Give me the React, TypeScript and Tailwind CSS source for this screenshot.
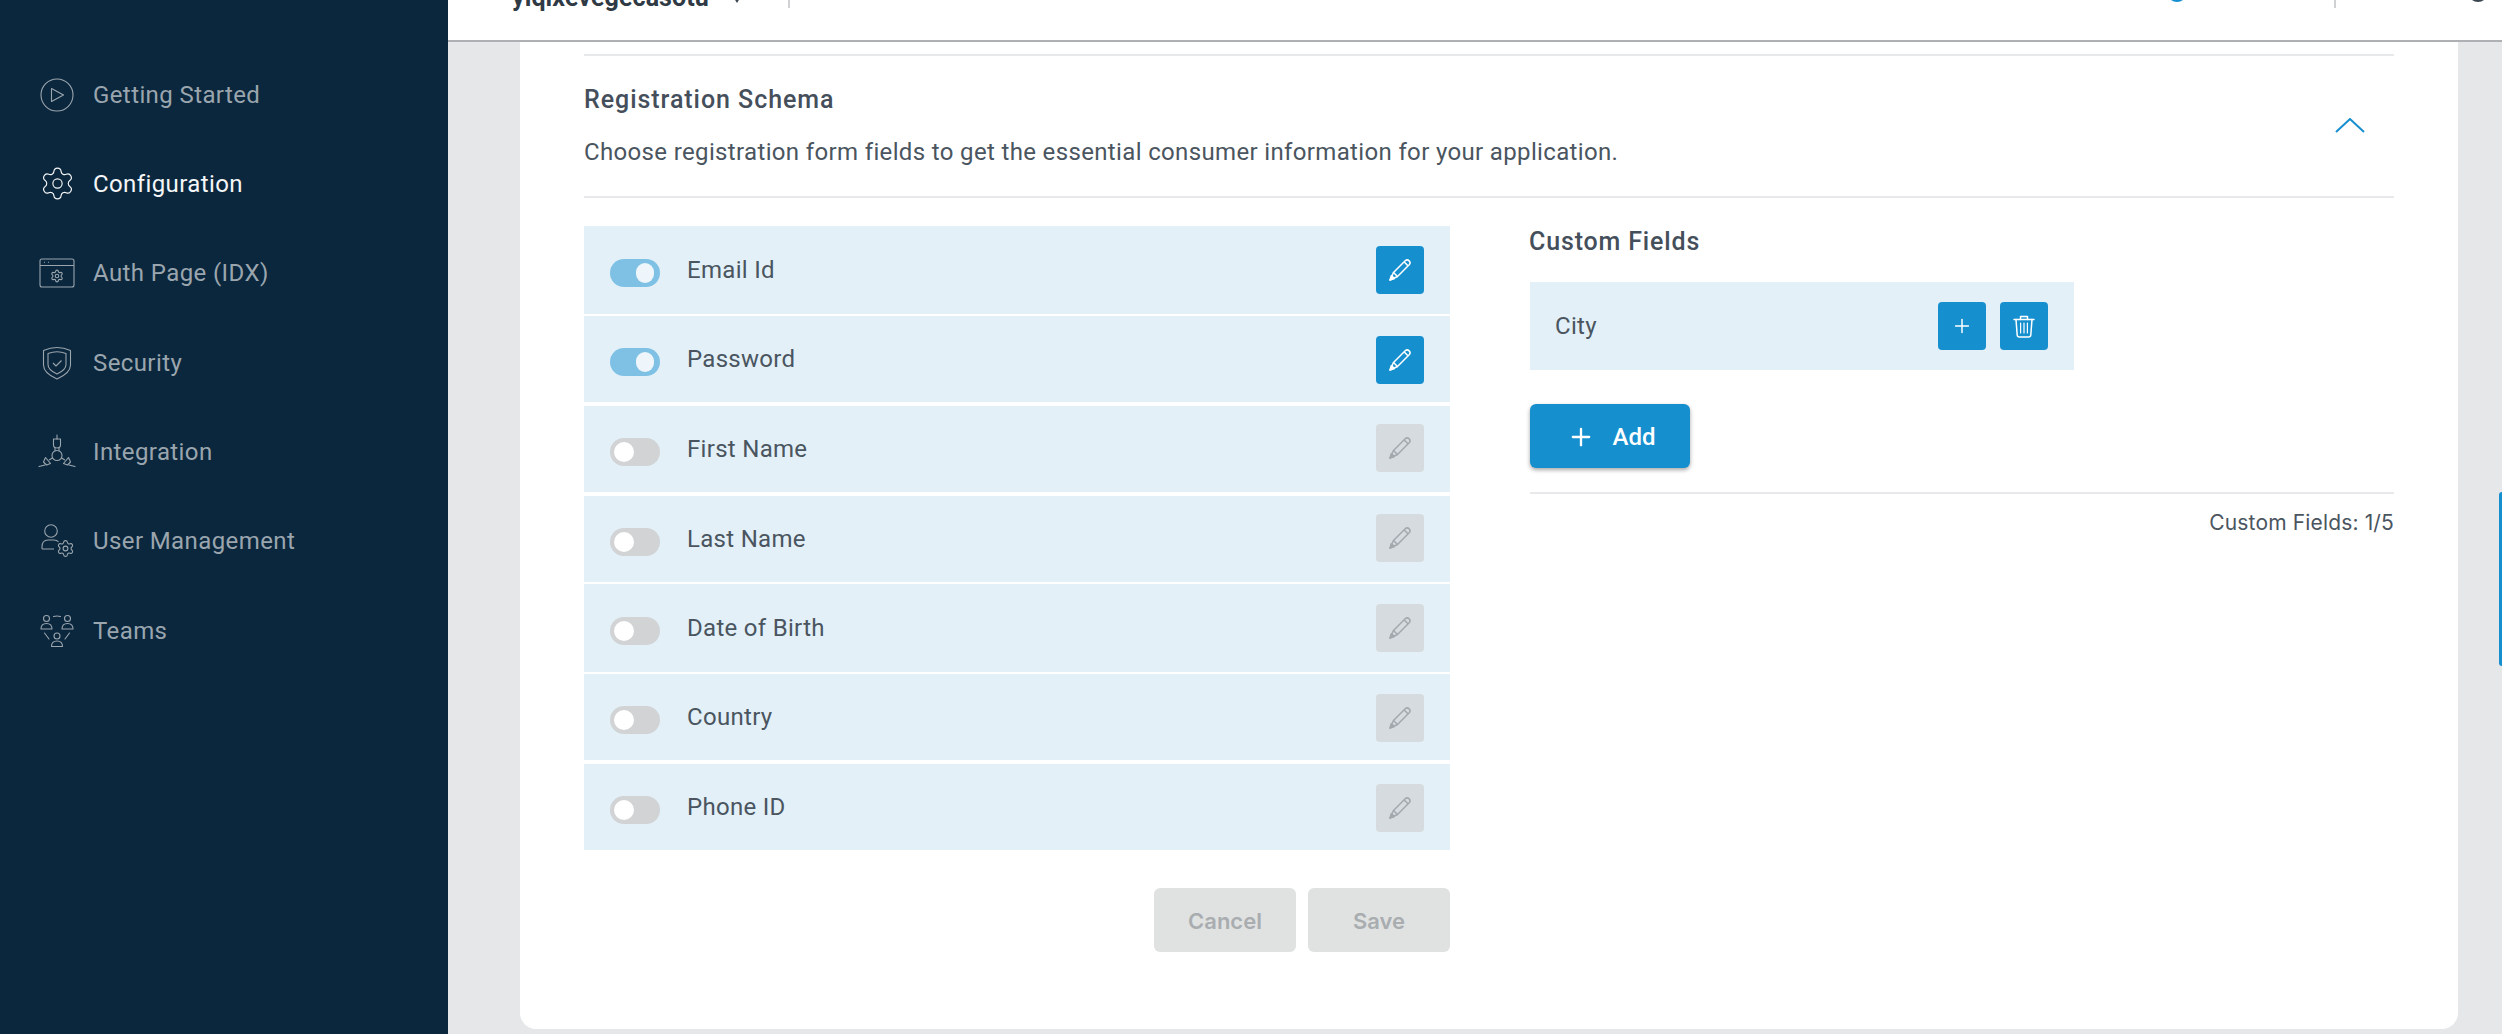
import { Plus, Settings } from 'lucide-react'

const font = "font-['Roboto',sans-serif]"

const PlayIcon = () => (
  <svg width="36" height="36" viewBox="0 0 36 36" fill="none" stroke="currentColor" strokeWidth="1.1">
    <circle cx="18" cy="18" r="16" />
    <path d="M12.5 11.5 L24.5 18 L12.5 24.5 Z" strokeLinejoin="round" />
  </svg>
)

const AuthIcon = () => (
  <svg width="36" height="36" viewBox="0 0 36 36" fill="none" stroke="currentColor" strokeWidth="1.1">
    <rect x="1" y="4" width="34" height="28" rx="2" />
    <path d="M1 10.5 H35" />
    <path d="M5 7.3 h1 M9 7.3 h1" />
    <Settings x={11} y={14} size={14} strokeWidth={1.9} />
  </svg>
)

const ShieldIcon = () => (
  <svg width="36" height="36" viewBox="0 0 36 36" fill="none" stroke="currentColor" strokeWidth="1.1" strokeLinejoin="round">
    <path d="M4.5 5.5 Q18 -.5 31.5 5.5 V20 Q31.5 28 18 34 Q4.5 28 4.5 20 Z" />
    <path d="M9 8.5 Q18 5 27 8.5 V19.5 Q27 25 18 29 Q9 25 9 19.5 Z" />
    <path d="M14 18 l3 3 5.5 -5.5" />
  </svg>
)

const IntegrationIcon = () => (
  <svg width="38" height="36" viewBox="0 0 38 36" fill="none" stroke="currentColor" strokeWidth="1.1" strokeLinecap="round" strokeLinejoin="round" className="-mx-px">
    <circle cx="19" cy="21.5" r="5" />
    <path d="M19 1 v4" />
    <path d="M15.5 5 h7 v6 a3.5 3 0 0 1 -7 0 Z" />
    <path d="M17 14 v3 M21 14 v3" />
    <path d="M14.5 24 l-3 1.8 M7.5 23.5 l5 6 -4 1.5 -3 -3 Z" />
    <path d="M7 31 l-6 1.5" />
    <path d="M23.5 24 l3 1.8 M30.5 23.5 l-5 6 4 1.5 3 -3 Z" />
    <path d="M31 31 l6 1.5" />
  </svg>
)

const UserGearIcon = () => (
  <svg width="36" height="36" viewBox="0 0 36 36" fill="none" stroke="currentColor" strokeWidth="1.1" strokeLinejoin="round">
    <circle cx="12" cy="8" r="6.3" />
    <path d="M3 26 V24 Q3 17 9 17 H15 Q18 17 19.5 19 M3 26 H15" />
    <Settings x={17} y={16} size={19} strokeWidth={1.4} />
  </svg>
)

const TeamsIcon = () => (
  <svg width="36" height="36" viewBox="0 0 36 36" fill="none" stroke="currentColor" strokeWidth="1.1" strokeLinecap="round" strokeLinejoin="round">
    <circle cx="7.5" cy="5.5" r="3" />
    <path d="M2 16 Q2 10.5 7.5 10.5 Q13 10.5 13 16 Z" />
    <circle cx="28.5" cy="5.5" r="3" />
    <path d="M23 16 Q23 10.5 28.5 10.5 Q34 10.5 34 16 Z" />
    <circle cx="18" cy="23" r="3" />
    <path d="M12.5 33.5 Q12.5 28 18 28 Q23.5 28 23.5 33.5 Z" />
    <path d="M14.5 3.5 Q18 2.5 21.5 3.5" />
    <path d="M5.5 20 L10 26 M30.5 20 L26 26" />
  </svg>
)

const PencilIcon = () => (
  <svg width="22" height="22" viewBox="0 0 22 22" fill="none" stroke="currentColor" strokeWidth="1.5" strokeLinejoin="round">
    <path d="M4.5 13.5 L16.2 1.8 A2.83 2.83 0 0 1 20.2 5.8 L8.5 17.5 Z" />
    <path d="M4.5 13.5 L1 21 L8.5 17.5" />
    <path d="M1 21 L2.4 16.6 L5.4 19.6 Z" fill="currentColor" />
    <path d="M15.2 3 L19 6.8" />
  </svg>
)

const TrashIcon = () => (
  <svg width="22" height="23" viewBox="0 0 22 23" fill="none" stroke="currentColor" strokeWidth="1.5" strokeLinecap="round" strokeLinejoin="round">
    <path d="M1 4.5 H21" />
    <path d="M7.5 4.5 V1.5 H14.5 V4.5" />
    <path d="M3 4.5 L4.2 20 Q4.4 22 6.4 22 H15.6 Q17.6 22 17.8 20 L19 4.5" />
    <path d="M7.6 8 V18 M11 8 V18 M14.4 8 V18" strokeWidth="1.2" />
  </svg>
)

const navItems = [
  { label: 'Getting Started', icon: <PlayIcon /> },
  { label: 'Configuration', icon: <Settings size={37} strokeWidth={0.75} />, active: true },
  { label: 'Auth Page (IDX)', icon: <AuthIcon /> },
  { label: 'Security', icon: <ShieldIcon /> },
  { label: 'Integration', icon: <IntegrationIcon /> },
  { label: 'User Management', icon: <UserGearIcon /> },
  { label: 'Teams', icon: <TeamsIcon /> },
]

// row heights and gaps follow the screenshot's uneven pixel snapping
const fields = [
  { label: 'Email Id', on: true, row: 'h-[88px]', btn: 'mt-[20px]' },
  { label: 'Password', on: true, row: 'mt-[2px] h-[86px]', btn: 'mt-[20px]' },
  { label: 'First Name', on: false, row: 'mt-[4px] h-[86px]', btn: 'mt-[18px]' },
  { label: 'Last Name', on: false, row: 'mt-[4px] h-[86px]', btn: 'mt-[18px]' },
  { label: 'Date of Birth', on: false, row: 'mt-[2px] h-[88px]', btn: 'mt-[20px]' },
  { label: 'Country', on: false, row: 'mt-[2px] h-[86px]', btn: 'mt-[20px]' },
  { label: 'Phone ID', on: false, row: 'mt-[4px] h-[86px]', btn: 'mt-[20px]' },
]

const Toggle = ({ on }: { on: boolean }) => (
  <span className={`mt-[5px] flex w-[50px] h-[28px] rounded-full items-center ${on ? 'bg-[#7fc1e5] justify-end pr-[6px]' : 'bg-[#d1d3d5] justify-start pl-[4px]'}`}>
    <span className={`h-[20px] rounded-full ${on ? 'w-[18px] bg-[#eef6fb]' : 'w-[20px] bg-white'}`} />
  </span>
)

const Sidebar = () => (
  <aside className="w-[448px] shrink-0 bg-[#0b273d] pt-[50px] pl-[38px]">
    {navItems.map(item => (
      <div
        key={item.label}
        className={`flex items-center gap-[17px] h-[89.33px] ${item.active ? 'text-[#f4f6f7]' : 'text-[#9aa5ae]'}`}
      >
        <span className="flex w-[38px] justify-center">{item.icon}</span>
        <span className="text-[24px] tracking-[0.4px]">{item.label}</span>
      </div>
    ))}
  </aside>
)

const Header = () => (
  <header className="flex h-[42px] shrink-0 overflow-hidden border-b-2 border-[#aeb0b3] bg-white">
    <span className="ml-[64px] -mt-[16px] text-[25px] leading-[28px] font-bold tracking-[0.1px] text-[#2f3a45]">yiqixevegecasotu</span>
    <span className="ml-[23px] -mt-[5px] w-0 h-0 border-x-[5px] border-x-transparent border-t-[8px] border-t-[#3b4550]" />
    <span className="ml-[46px] w-[2px] h-[8px] bg-[#cfd1d3]" />
    <span className="ml-[1377px] -mt-[18px] w-[20px] h-[20px] rounded-full bg-[#168fcf]" />
    <span className="ml-[147px] w-[2px] h-[8px] bg-[#cfd1d3]" />
    <span className="ml-[132px] -mt-[18px] w-[20px] h-[20px] rounded-full bg-[#3b4550]" />
  </header>
)

const FieldRow = ({ label, on, row, btn }: { label: string; on: boolean; row: string; btn: string }) => (
  <div className={`flex items-start bg-[#e3f0f8] pl-[26px] pr-[26px] ${row}`}>
    <span className="flex h-full items-center">
      <Toggle on={on} />
    </span>
    <span className="ml-[27px] flex h-full flex-1 items-center text-[24px] tracking-[0.3px] text-[#4a5560]">{label}</span>
    <button className={`flex w-[48px] h-[48px] items-center justify-center rounded-[4px] ${btn} ${on ? 'bg-[#168fcf] text-white' : 'bg-[#d6dbdf] text-[#a2a8ad]'}`}>
      <PencilIcon />
    </button>
  </div>
)

export default function App() {
  return (
    <div className={`flex h-[1034px] w-full overflow-hidden bg-[#e6e7e9] ${font}`}>
      <Sidebar />
      <div className="flex min-w-0 flex-1 flex-col">
        <Header />
        <div className="relative flex-1">
          <main className="ml-[72px] w-[1938px] h-[987px] rounded-b-[16px] bg-white px-[64px] pt-[12px]">
            <div className="border-y-2 border-[#e8e9ea] h-[144px] flex items-start justify-between">
              <div>
                <h2 className="mt-[30px] text-[25px] leading-[28px] font-medium tracking-[0.95px] text-[#454f5b]">Registration Schema</h2>
                <p className="mt-[24px] text-[24px] leading-[28px] tracking-[0.35px] text-[#4a5560]">
                  Choose registration form fields to get the essential consumer information for your application.
                </p>
              </div>
              <svg width="30" height="15" viewBox="0 0 30 15" fill="none" stroke="#168fcf" strokeWidth="2" className="mt-[62px] mr-[29px]">
                <path d="M1 14 L15 1 L29 14" />
              </svg>
            </div>

            <div className="mt-[28px] flex gap-[80px]">
              <section className="w-[866px]">
                {fields.map(f => (
                  <FieldRow key={f.label} {...f} />
                ))}
                <div className="mt-[38px] flex justify-end gap-[12px]">
                  <button className="w-[142px] h-[64px] rounded-[6px] bg-[#e0e2e2] pt-[2px] text-[22px] font-semibold text-[#a9adb0] font-['Inter',sans-serif]">Cancel</button>
                  <button className="w-[142px] h-[64px] rounded-[6px] bg-[#e0e2e2] pt-[2px] text-[22px] font-semibold text-[#a9adb0] font-['Inter',sans-serif]">Save</button>
                </div>
              </section>

              <section className="w-[864px]">
                <h3 className="mt-[2px] -ml-px text-[25px] leading-[28px] font-medium tracking-[0.85px] text-[#454f5b]">Custom Fields</h3>
                <div className="mt-[26px] flex h-[88px] w-[544px] items-center bg-[#e3f0f8] pl-[25px] pr-[26px]">
                  <span className="flex-1 text-[24px] tracking-[0.3px] text-[#4a5560]">City</span>
                  <button className="flex w-[48px] h-[48px] items-center justify-center rounded-[4px] bg-[#168fcf] text-white">
                    <Plus size={22} strokeWidth={1.6} />
                  </button>
                  <button className="ml-[14px] flex w-[48px] h-[48px] items-center justify-center rounded-[4px] bg-[#168fcf] text-white">
                    <TrashIcon />
                  </button>
                </div>
                <button className="mt-[34px] flex w-[160px] h-[64px] items-center justify-center gap-[18px] rounded-[6px] bg-[#168fcf] pl-[2px] pt-[2px] text-[24px] font-medium text-white shadow-[0_2px_4px_rgba(0,0,0,0.35)]">
                  <Plus size={28} strokeWidth={2} />
                  Add
                </button>
                <div className="mt-[24px] border-t-2 border-[#e8e9ea] pt-[15px] text-right text-[21px] leading-[28px] tracking-[0.15px] text-[#4a5560] font-['Inter',sans-serif]">
                  Custom Fields: 1/5
                </div>
              </section>
            </div>
          </main>
          <span className="absolute right-0 top-[450px] w-[3px] h-[174px] rounded-l-[3px] bg-[#168fcf]" />
        </div>
      </div>
    </div>
  )
}
